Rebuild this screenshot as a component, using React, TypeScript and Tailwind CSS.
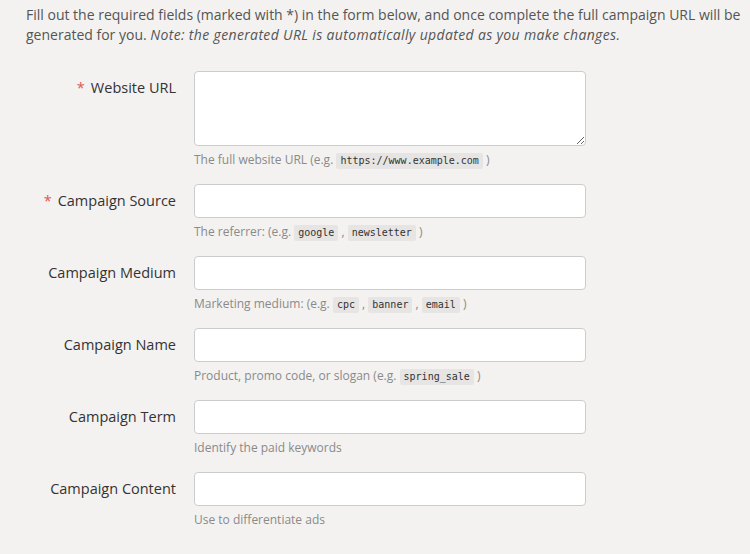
import React from 'react';

type Field = {
    label: string;
    required?: boolean;
    multiline?: boolean;
    hint: React.ReactNode;
};

const Code: React.FC<{ children: React.ReactNode }> = ({ children }) => (
    <code className="inline-block rounded-[2px] bg-[#e6e5e3] px-[4px] leading-[16px] text-[10px] text-[#333] font-['DejaVu_Sans_Mono',monospace] align-middle">
        {children}
    </code>
);

const FIELDS: Field[] = [
    {
        label: 'Website URL',
        required: true,
        multiline: true,
        hint: (
            <>
                The full website URL (e.g. <Code>https://www.example.com</Code> )
            </>
        ),
    },
    {
        label: 'Campaign Source',
        required: true,
        hint: (
            <>
                The referrer: (e.g. <Code>google</Code> , <Code>newsletter</Code> )
            </>
        ),
    },
    {
        label: 'Campaign Medium',
        hint: (
            <>
                Marketing medium: (e.g. <Code>cpc</Code> , <Code>banner</Code> , <Code>email</Code> )
            </>
        ),
    },
    {
        label: 'Campaign Name',
        hint: (
            <>
                Product, promo code, or slogan (e.g. <Code>spring_sale</Code> )
            </>
        ),
    },
    { label: 'Campaign Term', hint: 'Identify the paid keywords' },
    { label: 'Campaign Content', hint: 'Use to differentiate ads' },
];

export default function App() {
    return (
        <div className="min-h-[554px] w-[750px] bg-[#f3f2f0] font-['Open_Sans',sans-serif] overflow-hidden">
            <p className="pl-[26px] pr-1 pt-[5px] text-[14px] leading-[19.5px] text-[#555]">
                Fill out the required fields (marked with *) in the form below, and once complete the full campaign URL will be
                generated for you.{' '}
                <em className="tracking-[0.35px]">Note: the generated URL is automatically updated as you make changes.</em>
            </p>

            <form className="mt-[27px]">
                {FIELDS.map((field) => (
                    <div key={field.label} className="flex mb-[14px]">
                        <label className="w-[176px] shrink-0 pt-[7px] text-right text-[14.5px] leading-[20px] text-[#333]">
                            {field.required && <span className="mr-[6px] text-[#e0554f]">*</span>}
                            {field.label}
                        </label>
                        <div className="ml-[18px] w-[392px]">
                            {field.multiline ? (
                                <textarea className="block h-[75px] w-full rounded-[4px] border border-[#cccccc] bg-white px-2 py-1 text-[14px] outline-none" />
                            ) : (
                                <input
                                    type="text"
                                    className="block h-[34px] w-full rounded-[4px] border border-[#cccccc] bg-white px-2 text-[14px] outline-none"
                                />
                            )}
                            <div className="mt-[4px] text-[12px] leading-[20px] text-[#8a8a8a]">{field.hint}</div>
                        </div>
                    </div>
                ))}
            </form>
        </div>
    );
}
